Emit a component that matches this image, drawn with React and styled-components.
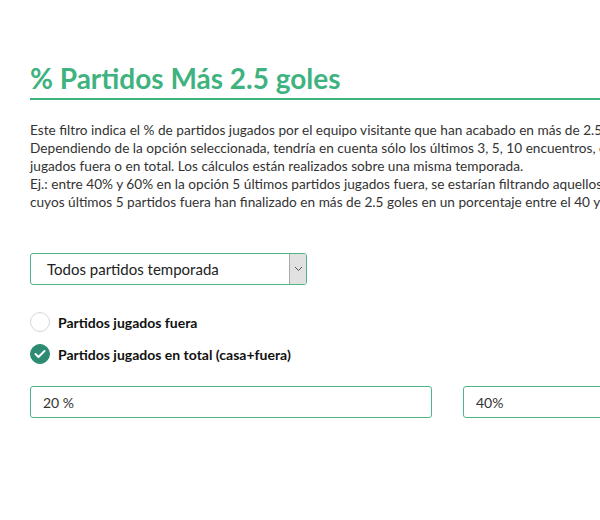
import styled, { createGlobalStyle } from 'styled-components';

const GlobalStyle = createGlobalStyle`
	body {
		margin: 0;
		overflow: hidden;
		font-family: Lato, "Liberation Sans", sans-serif;
		color: #333;
		background: #fff;
	}
`;

const Page = styled.div`
	width: 835px;
	padding: 62px 0 0 30px;
`;

const Title = styled.h2`
	margin: 0;
	padding-bottom: 4px;
	border-bottom: 2px solid #3fb37f;
	color: #3fb37f;
	font-size: 28px;
	font-weight: 700;
	line-height: 32px;
`;

const Description = styled.p`
	margin: 21px 0 0;
	font-size: 13.65px;
	line-height: 18px;
	white-space: nowrap;
	color: #333;
`;

const SelectBox = styled.div`
	display: flex;
	align-items: stretch;
	width: 277px;
	height: 32px;
	margin-top: 42px;
	box-sizing: border-box;
	border: 1px solid #4cb784;
	border-radius: 3px;
	overflow: hidden;
`;

const SelectText = styled.span`
	flex: 1;
	display: flex;
	align-items: center;
	padding-left: 16px;
	font-size: 15px;
	color: #222;
`;

const SelectButton = styled.span`
	width: 16px;
	display: flex;
	align-items: center;
	justify-content: center;
	background: #e1e1e1;
	border-left: 1px solid #a8a8a8;
`;

const Options = styled.div`
	display: flex;
	flex-direction: column;
	gap: 12px;
	margin-top: 27px;
`;

const Option = styled.label`
	display: flex;
	align-items: center;
	gap: 8px;
	font-size: 14px;
	font-weight: 700;
	color: #111;
`;

const Radio = styled.span`
	width: 20px;
	height: 20px;
	box-sizing: border-box;
	border-radius: 50%;
	display: flex;
	align-items: center;
	justify-content: center;
	border: 1px solid ${(p) => (p.$checked ? '#2e8b73' : '#d6d6d6')};
	background: ${(p) => (p.$checked ? '#2e8b73' : '#fff')};
`;

const Range = styled.div`
	display: grid;
	grid-template-columns: 1fr 1fr;
	column-gap: 31px;
	margin-top: 22px;
`;

const Field = styled.input`
	height: 32px;
	box-sizing: border-box;
	border: 1px solid #4cb784;
	border-radius: 3px;
	padding: 0 12px;
	font-family: Lato, "Liberation Sans", sans-serif;
	font-size: 14px;
	color: #333;
	outline: none;
`;

export default function App() {
	return (
		<>
			<GlobalStyle />
			<Page>
				<Title>% Partidos Más 2.5 goles</Title>
				<Description>
					Este filtro indica el % de partidos jugados por el equipo visitante que han acabado en más de 2.5 goles.
					<br />
					Dependiendo de la opción seleccionada, tendría en cuenta sólo los últimos 3, 5, 10 encuentros, o todos los partidos
					<br />
					jugados fuera o en total. Los cálculos están realizados sobre una misma temporada.
					<br />
					Ej.: entre 40% y 60% en la opción 5 últimos partidos jugados fuera, se estarían filtrando aquellos equipos visitantes
					<br />
					cuyos últimos 5 partidos fuera han finalizado en más de 2.5 goles en un porcentaje entre el 40 y 60%.
				</Description>
				<SelectBox>
					<SelectText>Todos partidos temporada</SelectText>
					<SelectButton>
						<svg width="9" height="6" viewBox="0 0 9 6">
							<path d="M1 1l3.5 3.5L8 1" fill="none" stroke="#555" strokeWidth="1" />
						</svg>
					</SelectButton>
				</SelectBox>
				<Options>
					<Option>
						<Radio />
						Partidos jugados fuera
					</Option>
					<Option>
						<Radio $checked>
							<svg width="12" height="10" viewBox="0 0 12 10">
								<path d="M1.5 5l3 3L10.5 2" fill="none" stroke="#fff" strokeWidth="2" strokeLinecap="round" strokeLinejoin="round" />
							</svg>
						</Radio>
						Partidos jugados en total (casa+fuera)
					</Option>
				</Options>
				<Range>
					<Field defaultValue="20 %" readOnly />
					<Field defaultValue="40%" readOnly />
				</Range>
			</Page>
		</>
	);
}
